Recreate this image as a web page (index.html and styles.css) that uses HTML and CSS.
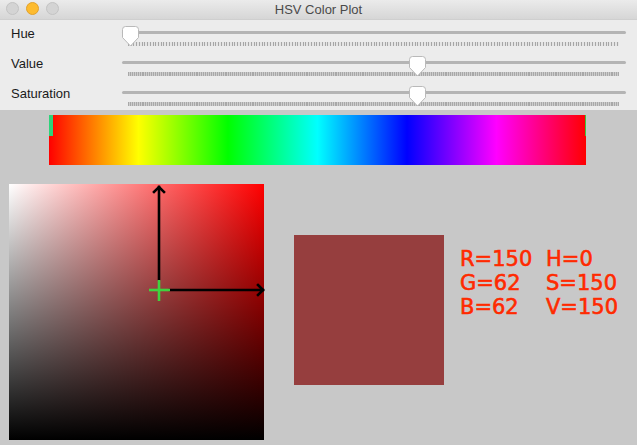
FILE: index.html
```html
<!DOCTYPE html>
<html>
<head>
<meta charset="utf-8">
<link rel="stylesheet" href="styles.css">
</head>
<body>
<div class="window">
  <div class="titlebar">
    <div class="lights">
      <span class="light gray"></span>
      <span class="light yellow"></span>
      <span class="light gray"></span>
    </div>
    <div class="title">HSV Color Plot</div>
  </div>
  <div class="controls">
    <div class="row">
      <div class="label">Hue</div>
      <div class="slider">
        <div class="track"></div>
        <div class="ticks ticks-hue"></div>
        <svg class="thumb" style="left:0px" width="17" height="21" viewBox="0 0 17 21"><path d="M3.5 0.5 H13.5 A3 3 0 0 1 16.5 3.5 V11.5 L8.5 20 L0.5 11.5 V3.5 A3 3 0 0 1 3.5 0.5 Z" fill="#fff" stroke="#b9b9b9"/></svg>
      </div>
    </div>
    <div class="row">
      <div class="label">Value</div>
      <div class="slider">
        <div class="track"></div>
        <div class="ticks ticks-val"></div>
        <svg class="thumb" style="left:287px" width="17" height="21" viewBox="0 0 17 21"><path d="M3.5 0.5 H13.5 A3 3 0 0 1 16.5 3.5 V11.5 L8.5 20 L0.5 11.5 V3.5 A3 3 0 0 1 3.5 0.5 Z" fill="#fff" stroke="#b9b9b9"/></svg>
      </div>
    </div>
    <div class="row">
      <div class="label">Saturation</div>
      <div class="slider">
        <div class="track"></div>
        <div class="ticks ticks-val"></div>
        <svg class="thumb" style="left:287px" width="17" height="21" viewBox="0 0 17 21"><path d="M3.5 0.5 H13.5 A3 3 0 0 1 16.5 3.5 V11.5 L8.5 20 L0.5 11.5 V3.5 A3 3 0 0 1 3.5 0.5 Z" fill="#fff" stroke="#b9b9b9"/></svg>
      </div>
    </div>
  </div>
  <div class="canvas">
    <div class="huebar">
      <div class="marker"></div>
      <div class="marker marker-end"></div>
    </div>
    <div class="lower">
      <div class="sv">
        <svg class="overlay" width="256" height="256" viewBox="0 0 256 256">
          <g stroke="#000" stroke-width="2.6" fill="none" stroke-linecap="square">
            <line x1="150" y1="3" x2="150" y2="95"/>
            <polyline points="145,8 150,3 155,8"/>
            <line x1="161" y1="106" x2="254" y2="106"/>
            <polyline points="249,101 254,106 249,111"/>
          </g>
          <g stroke="#3fd23f" stroke-width="2.6">
            <line x1="140" y1="106" x2="161" y2="106"/>
            <line x1="150" y1="96" x2="150" y2="117"/>
          </g>
        </svg>
      </div>
      <div class="swatch"></div>
      <div class="readout">
        <span>R=150</span><span>H=0</span>
        <span>G=62</span><span>S=150</span>
        <span>B=62</span><span>V=150</span>
      </div>
    </div>
  </div>
</div>
</body>
</html>
```
FILE: styles.css
```css
html, body {
  margin: 0;
  padding: 0;
}
body {
  width: 637px;
  height: 445px;
  overflow: hidden;
  font-family: "Liberation Sans", Arial, sans-serif;
  background: #c8c8c8;
}
.window {
  display: flex;
  flex-direction: column;
  height: 445px;
}
.titlebar {
  height: 20px;
  box-sizing: border-box;
  border-bottom: 1px solid #cfcfcf;
  background: linear-gradient(#ebebeb, #d6d6d6);
  display: flex;
  align-items: center;
  position: relative;
}
.lights {
  display: flex;
  gap: 7px;
  padding-left: 6px;
  margin-top: -2px;
}
.light {
  width: 13px;
  height: 13px;
  border-radius: 50%;
  box-sizing: border-box;
}
.light.gray {
  background: #d4d4d4;
  border: 1px solid #c3c3c3;
}
.light.yellow {
  background: #fdbb2f;
  border: 1px solid #e1a12c;
}
.title {
  position: absolute;
  left: 0;
  right: 0;
  top: 2px;
  text-align: center;
  font-size: 13px;
  color: #4a4a4a;
}
.controls {
  background: #ececec;
  height: 90px;
  display: flex;
  flex-direction: column;
}
.row {
  height: 30px;
  display: flex;
}
.label {
  width: 111px;
  padding-left: 11px;
  padding-top: 6px;
  font-size: 13px;
  color: #1a1a1a;
}
.slider {
  position: relative;
  width: 504px;
}
.track {
  margin-top: 11px;
  height: 3px;
  border-radius: 2px;
  background: #b4b4b4;
}
.ticks {
  margin: 8px 7px 0 6px;
  height: 4px;
}
.ticks-hue {
  background: repeating-linear-gradient(90deg, #a6a6a6 0 1px, #e4e4e4 1px 2.73px);
}
.ticks-val {
  background: repeating-linear-gradient(90deg, #a8a8a8 0 1px, #cdcdcd 1px 1.93px);
}
.thumb {
  position: absolute;
  top: 6px;
}
.canvas {
  flex: 1;
  background: #c8c8c8;
  padding-top: 5px;
}
.huebar {
  position: relative;
  margin-left: 49px;
  width: 537px;
  height: 50px;
  background: linear-gradient(90deg, #f00, #ff0, #0f0, #0ff, #00f, #f0f, #f00);
}
.marker {
  position: absolute;
  left: 0;
  top: 0;
  width: 4px;
  height: 21px;
  background: #2ed27a;
}
.marker-end {
  left: 536px;
  width: 1px;
  background: #3cc83c;
}
.lower {
  display: flex;
  align-items: flex-start;
  margin-top: 19px;
  padding-left: 9px;
}
.sv {
  position: relative;
  width: 255px;
  height: 256px;
  background:
    linear-gradient(to top, #000, rgba(0,0,0,0)),
    linear-gradient(to right, #fff, #f00);
}
.overlay {
  position: absolute;
  left: 0;
  top: 0;
}
.swatch {
  margin-left: 30px;
  margin-top: 51px;
  width: 150px;
  height: 150px;
  background: rgb(150, 62, 62);
}
.readout {
  margin-left: 16px;
  margin-top: 63px;
  display: grid;
  grid-template-columns: 86px auto;
  font-family: "DejaVu Sans", sans-serif;
  font-size: 21px;
  line-height: 24px;
  color: #ff2a00;
  -webkit-text-stroke: 0.6px #ff2a00;
}
```
